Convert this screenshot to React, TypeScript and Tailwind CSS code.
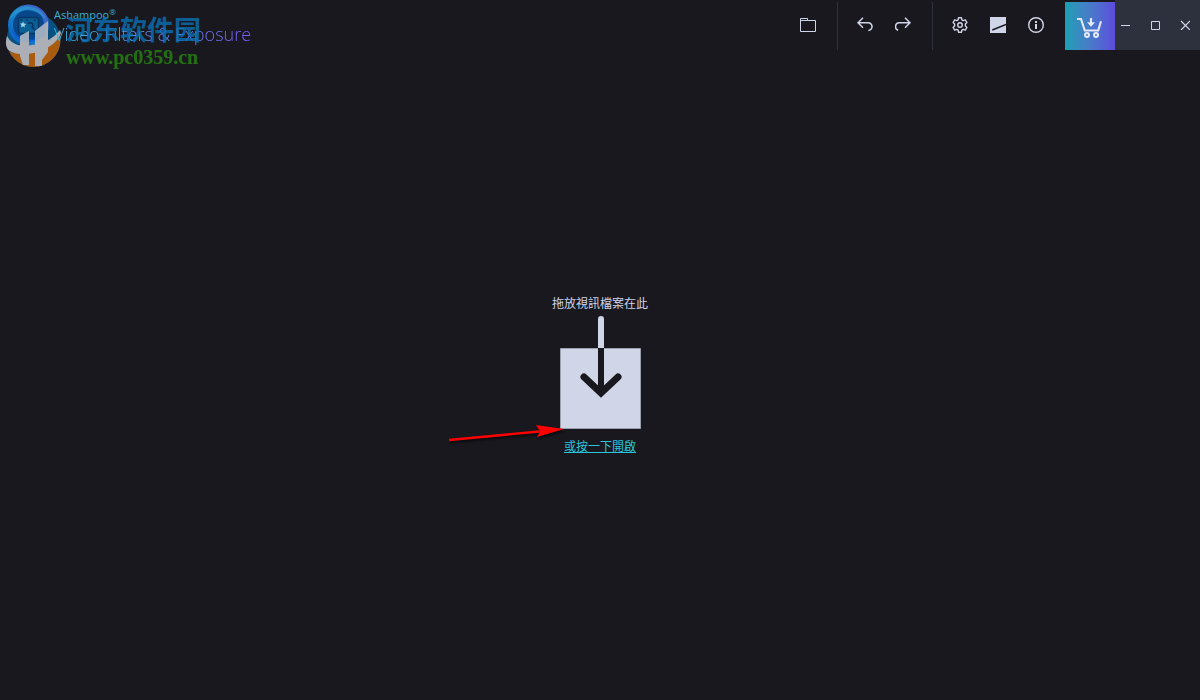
import type { ReactNode } from "react";

const ToolButton = ({ label, children }: { label: string; children: ReactNode }) => (
  <button
    type="button"
    aria-label={label}
    className="flex h-[50px] w-[38px] cursor-pointer items-center justify-center text-[#d0d5e8]"
  >
    {children}
  </button>
);

const WindowButton = ({ label, children }: { label: string; children: ReactNode }) => (
  <button
    type="button"
    aria-label={label}
    className="flex h-[50px] w-5 cursor-pointer items-center justify-center text-[#d0d5e8]"
  >
    {children}
  </button>
);

const Divider = () => <div className="mt-0.5 mr-2 ml-2.5 h-12 w-px bg-[#2d303d]" />;

const FolderIcon = () => (
  <svg width="16" height="16" viewBox="0 0 16 16" fill="none" stroke="currentColor">
    <path d="M.5 14.5V1.5H7.5V3.5H15.5V14.5ZM.5 3.5H7.5" />
  </svg>
);

const UndoIcon = () => (
  <svg width="16" height="16" viewBox="0 0 16 16" fill="none" stroke="currentColor" strokeWidth="1.5">
    <path d="M6 .8L1 5.8L6 10.8M1 5.8H11.2A3.8 3.8 0 0 1 11.3 13.4" />
  </svg>
);

const RedoIcon = () => (
  <svg width="16" height="16" viewBox="0 0 16 16" fill="none" stroke="currentColor" strokeWidth="1.5">
    <path d="M10 .8L15 5.8L10 10.8M15 5.8H4.8A3.8 3.8 0 0 0 3.2 13.2" />
  </svg>
);

const GearIcon = () => (
  <svg
    width="16"
    height="16"
    viewBox="0 0 16 16"
    fill="none"
    stroke="currentColor"
    strokeWidth="1.4"
    strokeLinejoin="round"
  >
    <path d="M6.5.8H9.5L9.9 2.8L11.3 3.6L13.3 2.9L14.9 5.5L13.4 6.9V9.1L14.9 10.5L13.3 13.1L11.3 12.4L9.9 13.2L9.5 15.2H6.5L6.1 13.2L4.7 12.4L2.7 13.1L1.1 10.5L2.6 9.1V6.9L1.1 5.5L2.7 2.9L4.7 3.6L6.1 2.8Z" />
    <circle cx="8" cy="8" r="2.3" />
  </svg>
);

const ContrastIcon = () => (
  <svg width="16" height="16" viewBox="0 0 16 16">
    <path d="M0 0H16V16H0Z" fill="currentColor" />
    <path d="M2.3 13L16 7.4" stroke="#19181e" strokeWidth="1.4" />
  </svg>
);

const InfoIcon = () => (
  <svg width="16" height="16" viewBox="0 0 16 16" fill="none" stroke="currentColor">
    <circle cx="8" cy="8" r="7.3" strokeWidth="1.4" />
    <path d="M7 4H9V6H7ZM7 7H9V12H7Z" fill="currentColor" stroke="none" />
  </svg>
);

const CartIcon = () => (
  <svg width="26" height="24" viewBox="0 -3 26 24" fill="none" stroke="#e4e8f8" strokeWidth="2.1">
    <path d="M0 2H4L7.8 13.5H21.2L24 4.2" />
    <circle cx="10" cy="18" r="2" />
    <circle cx="19" cy="18" r="2" />
    <path d="M14 1V6" />
    <path d="M10 5.2H18L14 9.8Z" fill="#e4e8f8" stroke="none" />
  </svg>
);

const LogoMark = () => (
  <svg width="64" height="70" viewBox="0 0 64 70" fill="none">
    <defs>
      <linearGradient id="ring" x1="0" y1="1" x2="1" y2="0">
        <stop offset="0" stopColor="#0a5fc4" />
        <stop offset="0.5" stopColor="#1a86c8" />
        <stop offset="1" stopColor="#4a55c4" />
      </linearGradient>
      <clipPath id="badge">
        <circle cx="33.5" cy="40" r="27" />
      </clipPath>
    </defs>
    <g clipPath="url(#badge)">
      <path d="M0 10H64V70H0Z" fill="#08517f" />
      <path d="M4 50C24 58 48 50 62 30V70H4Z" fill="#a95c10" />
    </g>
    <circle cx="28.5" cy="25" r="18" fill="#08488a" stroke="url(#ring)" strokeWidth="5" />
    <path d="M9 21C12 9 24 5 31 7C39 8 45 14 46 20C37 8 19 6 9 21Z" fill="#2b9fd6" fillOpacity="0.6" />
    <path d="M11 28C13 39 22 43 31 42C38 41 43 36 45 31C38 42 19 43 11 28Z" fill="#0a4fe0" fillOpacity="0.5" />
    <rect x="18.5" y="17.5" width="20" height="16" rx="2" fill="#0a6094" stroke="#0a3566" strokeWidth="1.5" />
    <path d="M20.5 20H22.5M26 20H28M34 20H36" stroke="#0a3566" strokeWidth="1.5" />
    <path d="M23 21.5L24 23.5L26.5 24L24.6 25.3L24.8 27.5L23 26.2L21 27.5L21.5 25L19.8 23.6L22.2 23.4Z" fill="#9dd5ee" />
    <path d="M28 24C30 21 35 24 32 27L36 31" stroke="#0a3566" strokeWidth="1.6" />
    <path
      d="M7 36C10 42 15 45 22 45.5C36 46.5 52 41 60 30L61 33C57 44 42 54 24 54C15 54 9 52 7 48C5 44 6 40 7 36Z"
      fill="#adafb6"
    />
    <g clipPath="url(#badge)">
      <path d="M20 36L29 31V65H23L20 56Z" fill="#adafb6" />
      <path d="M35 31L48 21V52L42 60V66H35Z" fill="#adafb6" />
    </g>
    <path d="M20 36L29 31V42H20ZM35 31L46 22.5V35L35 42Z" fill="#8fa9ca" fillOpacity="0.5" />
  </svg>
);

const Brand = () => (
  <div className="relative flex h-[70px] items-start">
    <LogoMark />
    <div className="-ml-2.5 pt-2 font-['Open_Sans','Noto_Sans',sans-serif] whitespace-nowrap">
      <p className="text-[11px] leading-[14px] text-[#3bb0cf]">
        Ashampoo<sup className="text-[8px]">®</sup>
      </p>
      <h1 className="bg-linear-to-r from-[#35b8e4] to-[#7a5cff] bg-clip-text text-[18px] leading-6 font-light text-transparent">
        Video Filters &amp; Exposure
      </h1>
    </div>
    <div className="pointer-events-none absolute top-3.5 left-[66px] whitespace-nowrap">
      <p className="font-['Noto_Sans_CJK_SC',sans-serif] text-[27px] leading-[30px] font-bold text-[#0872b8]/80">
        河东软件园
      </p>
      <p className="font-['Liberation_Serif',serif] text-[20px] leading-[26px] font-bold text-[#237013]">
        www.pc0359.cn
      </p>
    </div>
  </div>
);

const Header = () => (
  <header className="flex h-[50px] items-start justify-between">
    <Brand />
    <div className="flex items-end">
      <nav aria-label="Tools" className="flex">
        <ToolButton label="Open"><FolderIcon /></ToolButton>
        <Divider />
        <ToolButton label="Undo"><UndoIcon /></ToolButton>
        <ToolButton label="Redo"><RedoIcon /></ToolButton>
        <Divider />
        <ToolButton label="Settings"><GearIcon /></ToolButton>
        <ToolButton label="Theme"><ContrastIcon /></ToolButton>
        <ToolButton label="About"><InfoIcon /></ToolButton>
      </nav>
      <button
        type="button"
        aria-label="Buy now"
        className="ml-2.5 flex h-12 w-[50px] cursor-pointer items-center justify-center bg-linear-to-r from-[#159fb3] to-[#5c4bdc]"
      >
        <CartIcon />
      </button>
      <div className="flex gap-2.5 bg-[#2d303d] pr-[5px]">
        <WindowButton label="Minimize">
          <svg width="10" height="10" viewBox="0 0 10 10" stroke="currentColor">
            <path d="M1 5.5H10" />
          </svg>
        </WindowButton>
        <WindowButton label="Maximize">
          <svg width="10" height="10" viewBox="0 0 10 10" fill="none" stroke="currentColor">
            <path d="M1.5 1.5H9.5V9.5H1.5Z" />
          </svg>
        </WindowButton>
        <WindowButton label="Close">
          <svg width="10" height="10" viewBox="0 0 10 10" stroke="currentColor" strokeWidth="1.2">
            <path d="M1 1L10 10M10 1L1 10" />
          </svg>
        </WindowButton>
      </div>
    </div>
  </header>
);

const DropIcon = () => (
  <svg width="82" height="114" viewBox="0 0 82 114" fill="none">
    <path d="M1.5 32.5H81.5V112.5H1.5Z" fill="#d0d5e8" stroke="#9b9fae" />
    <path d="M39 32V3Q39 0 42 0Q45 0 45 3V32Z" fill="#d0d5e8" />
    <path d="M42 32V78" stroke="#19181e" strokeWidth="6" />
    <path d="M25 61L42 77L59 61" stroke="#19181e" strokeWidth="7" strokeLinecap="round" />
  </svg>
);

// Red pointer that ends at the lower left corner of the drop icon
const Pointer = () => (
  <svg
    width="118"
    height="20"
    viewBox="0 0 118 20"
    className="pointer-events-none absolute right-[76px] bottom-[-14px] drop-shadow-[1px_2px_1px_rgba(0,0,0,0.6)]"
  >
    <path d="M2 16L92 7.5" stroke="#ff0000" strokeWidth="2.4" />
    <path d="M89 1L117 5L90 13L93 7.5Z" fill="#ff0000" />
  </svg>
);

const App = () => {
  return (
    <div className="flex min-h-screen flex-col bg-[#19181e]">
      <Header />
      <main className="flex flex-1 flex-col items-center justify-center pb-px font-['Noto_Sans_CJK_TC',sans-serif] text-xs">
        <p className="leading-5 text-[#d0d5e8]">拖放視訊檔案在此</p>
        <div className="relative mt-[3px]">
          <DropIcon />
          <Pointer />
        </div>
        <a href="#open" className="mt-1.5 leading-5 text-[#2bc4d8] underline">
          或按一下開啟
        </a>
      </main>
    </div>
  );
};

export default App;
